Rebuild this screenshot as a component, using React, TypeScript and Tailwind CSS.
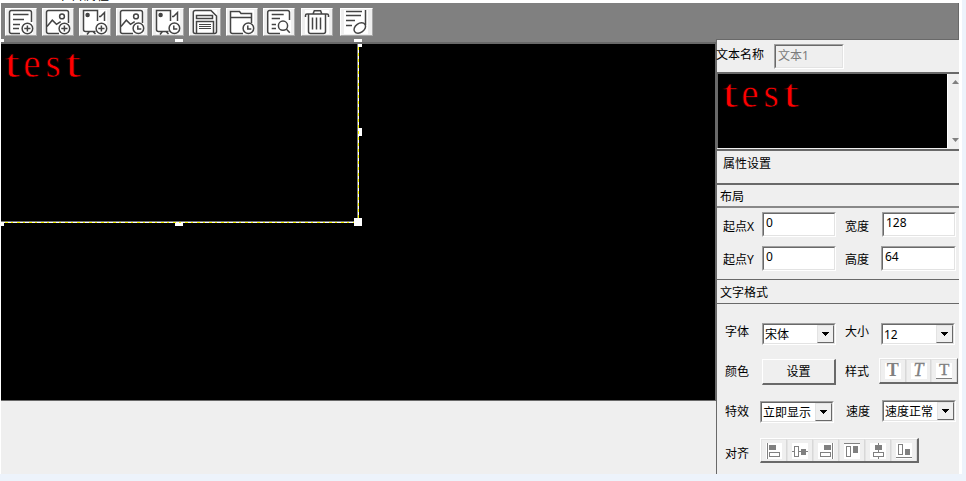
import React from 'react';

const PlusBadge = () => (
  <g>
    <circle cx="22.4" cy="20.5" r="5.3" fill="#fff" />
    <path d="M19.3 20.5h6.2M22.4 17.4v6.2" />
  </g>
);
const ClockBadge = () => (
  <g>
    <circle cx="22.4" cy="20.3" r="5.3" fill="#fff" />
    <path d="M21.8 17.4v3.7h3.5" />
  </g>
);
const Picture = () => (
  <g>
    <path d="M17 25.5H6.5a2 2 0 0 1-2-2V4.5a2 2 0 0 1 2-2H24.5a2 2 0 0 1 2 2V15" />
    <circle cx="20" cy="8.4" r="2.4" />
    <path d="M5 18.5l5.3-6.3 4.2 4.2 4.2-2.8" />
  </g>
);
const Camera = () => (
  <g>
    <path d="M16.5 23.5H6.5a2 2 0 0 1-2-2V2.5H18.5V13M20 8.5h1.5l4-4V13M10.5 23.5l-2.500 3M14 23.5l2.5 2.5" />
    <circle cx="8.6" cy="7" r="1.5" fill="#444" />
  </g>
);

const tools: { gap: string; icon: React.ReactNode }[] = [
  {
    gap: 'ml-[4px] w-8',
    icon: (
      <>
        <path d="M15 25.5H6.5a2 2 0 0 1-2-2V4.5a2 2 0 0 1 2-2H24.5a2 2 0 0 1 2 2V14M8 6.5h15.5M8 11.5h11M8 16.5h7M8 20.5h6" />
        <PlusBadge />
      </>
    ),
  },
  { gap: 'ml-[5px] w-8', icon: <><Picture /><PlusBadge /></> },
  { gap: 'ml-[5px] w-8', icon: <><Camera /><PlusBadge /></> },
  { gap: 'ml-[5px] w-8', icon: <><Picture /><ClockBadge /></> },
  { gap: 'ml-[4px] w-8', icon: <><Camera /><ClockBadge /></> },
  {
    gap: 'ml-[5px] w-8',
    icon: (
      <>
        <path d="M6.3 2.5H22l5.5 5.5v15.5a2 2 0 0 1-2 2H6.3a2 2 0 0 1-2-2v-19a2 2 0 0 1 2-2z" />
        <path d="M7.5 7.5h16v3h-16zM7.5 25V13.5h17V25" />
        <path strokeWidth="1" d="M10 16.5h12M10 18.5h12M10 20.5h12" />
      </>
    ),
  },
  {
    gap: 'ml-[5px] w-8',
    icon: (
      <>
        <path d="M17 25.5H6.5a2 2 0 0 1-2-2V3.5h9l1.5 2h10.5v8M4.5 9.5h21V15" />
        <ClockBadge />
      </>
    ),
  },
  {
    gap: 'ml-[5px] w-8',
    icon: (
      <>
        <path d="M17 25.5H6.7a2 2 0 0 1-2-2V4.5a2 2 0 0 1 2-2H24.5a2 2 0 0 1 2 2V12M8.7 6.5h12M8.7 10.5h8.3M8.7 16.5h4.3M8.7 20.5h4.3" />
        <circle cx="20" cy="17.7" r="4.6" />
        <path d="M23.3 21l3.5 3.7" />
      </>
    ),
  },
  {
    gap: 'ml-[6px] w-8',
    icon: (
      <>
        <path d="M4.5 9V7.5a1.500 1.500 0 0 1 1.500-1.500H26a1.500 1.500 0 0 1 1.500 1.500V9M12 6l1.300-3.300h6.300L20.800 6M7.500 6V23.500a2 2 0 0 0 2 2h13a2 2 0 0 0 2-2V6" />
        <path d="M11.500 9.500v12M15.500 9.500v12M19.500 9.500v12" />
      </>
    ),
  },
  {
    gap: 'ml-[7px] w-[33px]',
    icon: (
      <>
        <path d="M6 3.500h16M6 7.500h15M6 12.500h9M6 17.500h6M25.500 2V17" />
        <ellipse cx="19.800" cy="20" rx="6.300" ry="4.500" transform="rotate(-35 19.800 20)" />
      </>
    ),
  },
];

function Field({ value, className = '', disabled = false }: { value: string; className?: string; disabled?: boolean }) {
  return (
    <div className={`shrink-0 border border-t-[#a0a0a0] border-l-[#a0a0a0] border-r-white border-b-white ${className}`}>
      <div
        className={`h-full border border-t-[#696969] border-l-[#696969] border-r-[#e3e3e3] border-b-[#e3e3e3] pl-[2px] ${
          disabled ? 'bg-[#efefef] leading-[20px] text-[#7b7b7b]' : 'bg-white leading-[18px]'
        }`}
      >
        {value}
      </div>
    </div>
  );
}

function Select({ value, className = '' }: { value: string; className?: string }) {
  return (
    <div className={`h-[22px] shrink-0 border border-t-[#a0a0a0] border-l-[#a0a0a0] border-r-white border-b-white ${className}`}>
      <div className="flex h-full border border-t-[#696969] border-l-[#696969] border-r-[#e3e3e3] border-b-[#e3e3e3] bg-white">
        <span className="flex-1 overflow-hidden pl-px leading-[19px] whitespace-nowrap">{value}</span>
        <span className="flex w-[17px] shrink-0 items-center justify-center border border-t-[#e3e3e3] border-l-[#e3e3e3] border-r-[#696969] border-b-[#696969] bg-[#efefef]">
          <svg width="7" height="4" shapeRendering="crispEdges">
            <path d="M0 0h7v1H0zM1 1h5v1H1zM2 2h3v1H2zM3 3h1v1H3z" />
          </svg>
        </span>
      </div>
    </div>
  );
}

function RedText() {
  return (
    <div className="flex font-['Liberation_Serif',serif] text-[39px] leading-[40px] text-[#f00] [-webkit-text-stroke:0.6px_#000]">
      <span className="w-[18px] scale-x-[1.45] text-center">t</span>
      <span className="w-[22px] text-center">e</span>
      <span className="w-[20px] text-center">s</span>
      <span className="w-[20px] scale-x-[1.45] text-center">t</span>
    </div>
  );
}

const alignIcons = [
  <g key="l"><path d="M1.500 0v16" /><path d="M3 2h7v5H3z" fill="#808080" stroke="none" /><path d="M3.500 9.500h10v4h-10z" /></g>,
  <g key="c"><path d="M0 8.500h3M7 8.500h9" /><path d="M2.500 3.500h4v10h-4z" /><path d="M9 6h5v6H9z" fill="#808080" stroke="none" /></g>,
  <g key="r"><path d="M14.500 0v16" /><path d="M6 2h7v5H6z" fill="#808080" stroke="none" /><path d="M2.500 9.500h10v4h-10z" /></g>,
  <g key="t"><path d="M0 0.500h16" /><path d="M2.500 3.500h4v10h-4z" /><path d="M9 3h5v7H9z" fill="#808080" stroke="none" /></g>,
  <g key="m"><path d="M8.500 0v16" /><path d="M5 2h7v5H5z" fill="#808080" stroke="none" /><path d="M3.500 9.500h10v4h-10z" fill="#fff" /></g>,
  <g key="b"><path d="M0 14.500h16" /><path d="M2.500 1.500h4v10h-4z" /><path d="M9 6h5v6H9z" fill="#808080" stroke="none" /></g>,
];

const raised = 'flex items-center justify-center border border-t-[#e3e3e3] border-l-[#e3e3e3] border-r-[#d8d8d8] border-b-0';
const label = 'w-[37px] shrink-0 whitespace-nowrap leading-[18px]';
const handle = 'absolute bg-white';

export default function App() {
  return (
    <div className="flex h-[481px] w-[966px] overflow-hidden bg-[#edf3fb] font-['Noto_Sans','Noto_Sans_CJK_SC',sans-serif] text-[12px] text-black">
      <div className="flex w-[962px] shrink-0 flex-col">
        <div className="flex h-[3px] items-end overflow-hidden bg-white pl-[58px]">
          <span className="leading-[14px] tracking-[1px] whitespace-nowrap">节目属性</span>
        </div>
        <div className="flex h-[471px] bg-white pl-px">
          <main className="flex w-[715px] shrink-0 flex-col bg-[#efefef]">
            <div className="flex h-[41px] shrink-0 border-b-2 border-[#696969] bg-[#808080] pt-[5px]">
              {tools.map((tool, i) => (
                <button
                  key={i}
                  className={`h-[28px] shrink-0 border border-t-white border-l-white border-r-[#a8a8a8] border-b-[#a8a8a8] bg-[#efefef] ${tool.gap}`}
                >
                  <svg width="30" height="26" viewBox="1 1 30 26" fill="none" stroke="#444" strokeWidth="1.5">
                    <path d="M4 2h24v24H4z" fill="#fff" stroke="none" />
                    {tool.icon}
                  </svg>
                </button>
              ))}
            </div>
            <div className="relative h-[357px] shrink-0 border-r border-b border-[#696969] bg-black">
              <div className="h-[179px] w-[358px] pl-[2px]">
                <RedText />
              </div>
              <div className="absolute top-[177px] left-0 h-px w-[357px] bg-[#777]" />
              <div className="absolute top-0 left-[356px] h-[178px] w-px bg-[#777]" />
              <div className="absolute top-[178px] left-0 h-px w-[358px] bg-[repeating-linear-gradient(90deg,#fff_0_4px,#ff0_4px_7px,#fff_7px_10px,#ff0_10px_12px)]" />
              <div className="absolute top-0 left-[357px] h-[179px] w-px bg-[repeating-linear-gradient(180deg,#fff_0_3px,#ff0_3px_6px)]" />
              <i className={`${handle} -top-[5px] left-0 h-[3px] w-[3px]`} />
              <i className={`${handle} -top-[5px] left-[174px] h-[3px] w-[8px]`} />
              <i className={`${handle} -top-[5px] left-[353px] h-[3px] w-[8px]`} />
              <i className={`${handle} top-0 left-[357px] h-[3px] w-[4px]`} />
              <i className={`${handle} top-[84px] left-[358px] h-[8px] w-[3px]`} />
              <i className={`${handle} top-[174px] left-[353px] h-[8px] w-[8px]`} />
              <i className={`${handle} top-[179px] left-[174px] h-[3px] w-[8px]`} />
              <i className={`${handle} top-[179px] left-0 h-[3px] w-[3px]`} />
            </div>
          </main>

          <aside className="flex w-[243px] shrink-0 flex-col bg-[#efefef]">
            <div className="h-[37px] shrink-0 border-r border-b border-[#696969] bg-[#808080]" />
            <div className="flex flex-1 flex-col border-l border-[#696969]">
              <div className="flex h-[34px] shrink-0 border-b-2 border-[#696969] pt-[4px]">
                <span className="-ml-px w-[58px] leading-[21px] whitespace-nowrap">文本名称</span>
                <Field value="文本1" disabled className="h-[25px] w-[70px]" />
              </div>
              <div className="flex h-[77px] shrink-0 border-b-2 border-[#696969]">
                <div className="h-[74px] w-[230px] shrink-0 border-l border-[#696969] bg-black pl-[3px]">
                  <RedText />
                </div>
                <div className="flex h-[74px] flex-1 flex-col items-end justify-between border-l border-white bg-[#f0f0f0] py-[6px]">
                  <svg width="7" height="4"><path d="M0 4L3.500 0 7 4z" fill="#808080" /></svg>
                  <svg width="7" height="4"><path d="M0 0L3.500 4 7 0z" fill="#808080" /></svg>
                </div>
              </div>
              <div className="h-[34px] shrink-0 border-b-2 border-[#696969] pt-[4px] pl-[6px] leading-[18px]">属性设置</div>
              <div className="h-[23px] shrink-0 border-b-2 border-[#888] pt-[3px] pl-[3px] leading-[18px]">布局</div>
              <div className="h-[72px] shrink-0 border-b border-[#696969] pl-[6px]">
                <div className="flex h-[38px] pt-[4px]">
                  <span className="w-[39px] shrink-0 pt-[6px] leading-[18px] whitespace-nowrap">起点X</span>
                  <Field value="0" className="h-[25px] w-[74px]" />
                  <span className={`ml-[9px] pt-[6px] ${label}`}>宽度</span>
                  <Field value="128" className="h-[25px] w-[74px]" />
                </div>
                <div className="flex">
                  <span className="w-[39px] shrink-0 pt-[5px] leading-[18px] whitespace-nowrap">起点Y</span>
                  <Field value="0" className="h-[25px] w-[74px]" />
                  <span className="ml-[9px] w-[36px] shrink-0 pt-[5px] leading-[18px]">高度</span>
                  <Field value="64" className="h-[25px] w-[75px]" />
                </div>
              </div>
              <div className="h-[24px] shrink-0 border-b border-[#696969] pt-[4px] pl-[3px] leading-[18px]">文字格式</div>
              <div className="flex h-[54px] shrink-0 pt-[19px] pl-[8px]">
                <span className={label}>字体</span>
                <Select value="宋体" className="w-[74px]" />
                <span className="ml-[9px] w-[36px] shrink-0 leading-[18px]">大小</span>
                <Select value="12" className="w-[74px]" />
              </div>
              <div className="flex h-[42px] shrink-0 pl-[8px]">
                <span className={`pt-[5px] ${label}`}>颜色</span>
                <button className="mt-px h-[26px] w-[74px] shrink-0 border-t border-l border-r-2 border-b-2 border-t-white border-l-white border-r-[#696969] border-b-[#696969] leading-[24px]">设置</button>
                <span className="ml-[9px] w-[34px] shrink-0 pt-[5px] leading-[18px]">样式</span>
                <div className="flex h-[26px] w-[79px] shrink-0 border-t border-l border-r border-b-2 border-t-white border-l-white border-r-[#696969] border-b-[#696969] font-['Liberation_Serif',serif] text-[18px] leading-[15px] text-[#808080]">
                  <span className={`${raised} flex-1`}><b className="h-4 w-4 bg-white text-center">T</b></span>
                  <span className={`${raised} flex-1`}><b className="h-4 w-4 bg-white text-center font-normal italic [-webkit-text-stroke:0.3px_#808080]">T</b></span>
                  <span className={`${raised} flex-1`}><b className="h-4 w-4 border-b border-[#808080] bg-white text-center text-[17px] leading-[14px] font-normal [-webkit-text-stroke:0.3px_#808080]">T</b></span>
                </div>
              </div>
              <div className="flex h-[38px] shrink-0 pl-[8px]">
                <span className="w-[35px] shrink-0 pt-[3px] leading-[18px]">特效</span>
                <Select value="立即显示" className="mt-px w-[74px]" />
                <span className="ml-[12px] w-[36px] shrink-0 pt-[3px] leading-[18px]">速度</span>
                <Select value="速度正常" className="w-[74px]" />
              </div>
              <div className="flex h-[34px] shrink-0 pl-[8px]">
                <span className="w-[35px] shrink-0 pt-[7px] leading-[18px]">对齐</span>
                <div className="flex h-[25px] w-[159px] border-t border-l border-r-2 border-b-2 border-t-white border-l-white border-r-[#696969] border-b-[#696969]">
                  {alignIcons.map((icon, i) => (
                    <span key={i} className={`${raised} flex-1 ${i === 2 ? 'border-r-[#a0a0a0]' : ''}`}>
                      <svg width="16" height="16" viewBox="0 0 16 16" fill="none" stroke="#808080" className="shrink-0 bg-white" shapeRendering="crispEdges">
                        {icon}
                      </svg>
                    </span>
                  ))}
                </div>
              </div>
            </div>
          </aside>
        </div>
      </div>
    </div>
  );
}
